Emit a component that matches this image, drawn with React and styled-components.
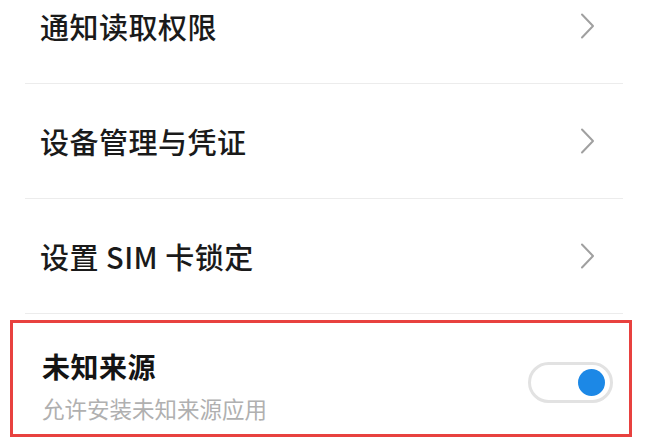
import React from 'react';
import styled, { createGlobalStyle } from 'styled-components';

const GlobalStyle = createGlobalStyle`
  html, body {
    margin: 0;
    padding: 0;
    background: #ffffff;
    overflow: hidden;
  }
  body {
    font-family: "Noto Sans CJK SC", "Noto Sans", sans-serif;
  }
`;

const Page = styled.div`
  width: 650px;
  height: 441px;
  overflow: hidden;
  background: #ffffff;
`;

const List = styled.div`
  display: flex;
  flex-direction: column;
  margin-top: -31px;
`;

const Row = styled.div`
  height: 114px;
  margin: 0 27px 0 25px;
  padding: 0 28px 0 15px;
  border-bottom: 1px solid #ececec;
  display: flex;
  align-items: center;
  justify-content: space-between;
`;

const Label = styled.span`
  font-size: 29px;
  font-weight: 500;
  color: #1a1a1a;
  letter-spacing: 0.5px;
`;

const Highlight = styled.div`
  margin: 6px 18px 0 10px;
  height: 111px;
  border: 3px solid #e8413f;
  padding: 0 16px 0 29px;
  display: flex;
  align-items: center;
  justify-content: space-between;
`;

const TextStack = styled.div`
  display: flex;
  flex-direction: column;
  gap: 9px;
  padding-top: 14px;
`;

const Title = styled.span`
  font-size: 28px;
  line-height: 36px;
  font-weight: 600;
  color: #141414;
  letter-spacing: 0.5px;
`;

const Subtitle = styled.span`
  font-size: 22.5px;
  line-height: 30px;
  color: #b0b0b0;
`;

const Switch = styled.div`
  width: 85px;
  height: 41px;
  box-sizing: border-box;
  border: 3px solid #e2e2e2;
  border-radius: 21px;
  background: #ffffff;
  display: flex;
  align-items: center;
  justify-content: ${p => (p.on ? 'flex-end' : 'flex-start')};
  padding: 0 5px;
  margin-top: 7px;
`;

const Knob = styled.div`
  width: 27px;
  height: 27px;
  border-radius: 50%;
  background: ${p => (p.on ? '#1c88e6' : '#cccccc')};
`;

const Chevron = () => (
  <svg width="15" height="26" viewBox="0 0 15 26" fill="none">
    <polyline
      points="2,1.5 13,13 2,24.5"
      stroke="#a0a0a0"
      strokeWidth="2"
      strokeLinecap="round"
      strokeLinejoin="round"
    />
  </svg>
);

const items = ['通知读取权限', '设备管理与凭证', '设置 SIM 卡锁定'];

export default function App() {
  return (
    <Page>
      <GlobalStyle />
      <List>
        {items.map(text => (
          <Row key={text}>
            <Label>{text}</Label>
            <Chevron />
          </Row>
        ))}
      </List>
      <Highlight>
        <TextStack>
          <Title>未知来源</Title>
          <Subtitle>允许安装未知来源应用</Subtitle>
        </TextStack>
        <Switch on>
          <Knob on />
        </Switch>
      </Highlight>
    </Page>
  );
}
